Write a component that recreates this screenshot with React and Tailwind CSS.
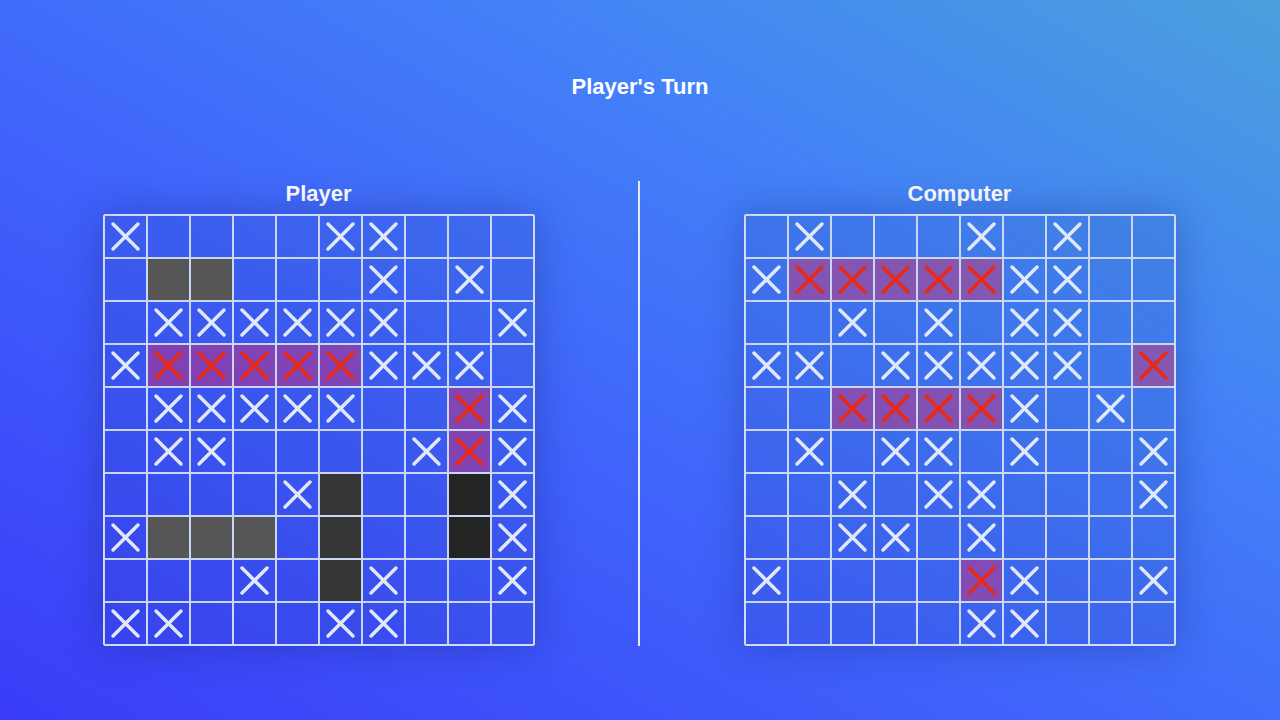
import React from 'react';

// . empty, x miss, h hit, a/b/c ship shades
const playerGrid = [
  'x....xx...',
  '.aa...x.x.',
  '.xxxxxx..x',
  'xhhhhhxxx.',
  '.xxxxx..hx',
  '.xx....xhx',
  '....xb..cx',
  'xaaa.b..cx',
  '...x.bx..x',
  'xx...xx...',
];

const computerGrid = [
  '.x...x.x..',
  'xhhhhhxx..',
  '..x.x.xx..',
  'xx.xxxxx.h',
  '..hhhhx.x.',
  '.x.xx.x..x',
  '..x.xx...x',
  '..xx.x....',
  'x....hx..x',
  '.....xx...',
];

const Mark = ({ red }) => (
  <svg width="41" height="41" viewBox="0 0 41 41" className="block">
    <g stroke={red ? '#ec2812' : '#e0e9fc'} strokeWidth="3.5" strokeLinecap="round">
      <line x1="8" y1="8" x2="33" y2="33" />
      <line x1="33" y1="8" x2="8" y2="33" />
    </g>
  </svg>
);

const cellBg = {
  '.': 'bg-[rgba(30,50,140,0.1)]',
  x: 'bg-[rgba(30,50,140,0.1)]',
  h: 'bg-[rgba(225,30,80,0.42)]',
  a: 'bg-[#565656]',
  b: 'bg-[#363636]',
  c: 'bg-[#242424]',
};

const Board = ({ title, rows }) => (
  <div className="flex flex-col items-center">
    <h2 className="text-[22px] leading-[26px] font-bold text-white mb-[7px]">{title}</h2>
    <div className="grid grid-cols-[repeat(10,43px)] border border-[#d3def6] rounded-[2px] shadow-[0_0_40px_rgba(10,20,90,0.3)]">
      {rows.map((row, r) =>
        row.split('').map((ch, c) => (
          <div key={r + '-' + c} className={'w-[43px] h-[43px] border border-[#c9d7f3] ' + cellBg[ch]}>
            {ch === 'x' && <Mark />}
            {ch === 'h' && <Mark red />}
          </div>
        ))
      )}
    </div>
  </div>
);

export default function App() {
  return (
    <div
      className="w-full h-[720px] overflow-hidden flex flex-col bg-[linear-gradient(30deg,#3a3cf8_0%,#3f62fb_40%,#4382f7_70%,#4aa0dc_100%)]"
      style={{ fontFamily: '"Liberation Sans", Arial, sans-serif' }}
    >
      <h1 className="text-center text-white font-bold text-[22px] leading-[28px] mt-[73px]">Player's Turn</h1>
      <div className="flex mt-[80px]">
        <div className="w-[637px] flex justify-center">
          <Board title="Player" rows={playerGrid} />
        </div>
        <div className="w-[2px] ml-[1px] bg-[#e3ebfb]" />
        <div className="flex-1 flex justify-center pr-[1px]">
          <Board title="Computer" rows={computerGrid} />
        </div>
      </div>
    </div>
  );
}
